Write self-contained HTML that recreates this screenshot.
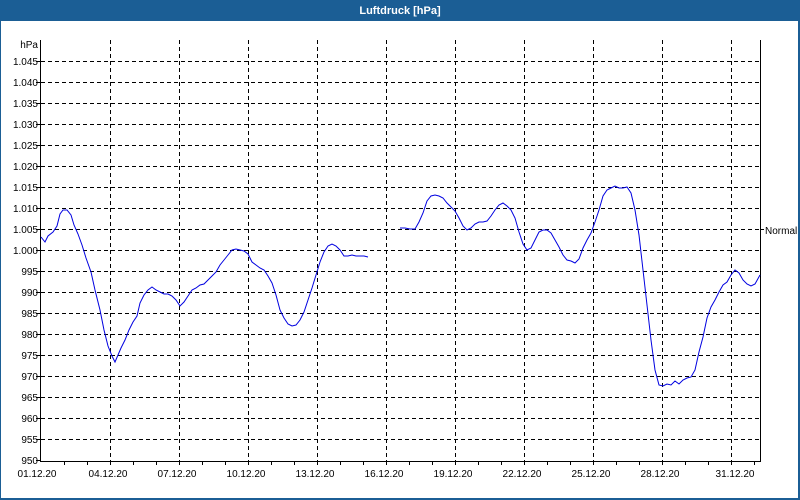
<!DOCTYPE html>
<html><head><meta charset="utf-8"><style>
html,body{margin:0;padding:0;width:800px;height:500px;overflow:hidden;background:#1b5e95}
#c{position:absolute;left:0;top:0}
</style></head><body>
<svg id="c" width="800" height="500" xmlns="http://www.w3.org/2000/svg" font-family="Liberation Sans, sans-serif">
<rect x="0" y="0" width="800" height="500" fill="#1b5e95"/>
<rect x="1" y="21" width="797" height="477" fill="#fff"/>
<text x="400" y="14" fill="#fff" font-size="11" font-weight="bold" text-anchor="middle">Luftdruck [hPa]</text>
<g stroke="#000" stroke-dasharray="4,3" stroke-width="1">
<path d="M41 61.5H760M41 82.5H760M41 103.5H760M41 124.5H760M41 145.5H760M41 166.5H760M41 187.5H760M41 208.5H760M41 229.5H760M41 250.5H760M41 271.5H760M41 292.5H760M41 313.5H760M41 334.5H760M41 355.5H760M41 376.5H760M41 397.5H760M41 418.5H760M41 439.5H760"/>
<path d="M110.5 40V461M179.5 40V461M248.5 40V461M317.5 40V461M386.5 40V461M455.5 40V461M524.5 40V461M593.5 40V461M662.5 40V461M731.5 40V461"/>
</g>
<g stroke="#000" stroke-width="1" fill="none">
<path d="M40.5 40V461.5H760.5V40"/>
<path d="M64.5 461v4M87.5 461v4M110.5 461v4M133.5 461v4M156.5 461v4M179.5 461v4M202.5 461v4M225.5 461v4M248.5 461v4M271.5 461v4M294.5 461v4M317.5 461v4M340.5 461v4M363.5 461v4M386.5 461v4M409.5 461v4M432.5 461v4M455.5 461v4M478.5 461v4M501.5 461v4M524.5 461v4M547.5 461v4M570.5 461v4M593.5 461v4M616.5 461v4M639.5 461v4M662.5 461v4M685.5 461v4M708.5 461v4M731.5 461v4M754.5 461v4"/>
<path d="M36 61.5h5M36 82.5h5M36 103.5h5M36 124.5h5M36 145.5h5M36 166.5h5M36 187.5h5M36 208.5h5M36 229.5h5M36 250.5h5M36 271.5h5M36 292.5h5M36 313.5h5M36 334.5h5M36 355.5h5M36 376.5h5M36 397.5h5M36 418.5h5M36 439.5h5M36 460.5h5M760 229.5h4"/>
</g>
<g font-size="10" fill="#000" text-anchor="end">
<text x="38" y="48">hPa</text>
<text x="38" y="65">1.045</text><text x="38" y="86">1.040</text><text x="38" y="107">1.035</text><text x="38" y="128">1.030</text><text x="38" y="149">1.025</text><text x="38" y="170">1.020</text><text x="38" y="191">1.015</text><text x="38" y="212">1.010</text><text x="38" y="233">1.005</text><text x="38" y="254">1.000</text><text x="38" y="275">995</text><text x="38" y="296">990</text><text x="38" y="317">985</text><text x="38" y="338">980</text><text x="38" y="359">975</text><text x="38" y="380">970</text><text x="38" y="401">965</text><text x="38" y="422">960</text><text x="38" y="443">955</text><text x="38" y="464">950</text>
</g>
<text x="765" y="234" font-size="10">Normal</text>
<g font-size="10" text-anchor="middle">
<text x="37" y="477">01.12.20</text><text x="108" y="477">04.12.20</text><text x="177" y="477">07.12.20</text><text x="246" y="477">10.12.20</text><text x="315" y="477">13.12.20</text><text x="384" y="477">16.12.20</text><text x="453" y="477">19.12.20</text><text x="522" y="477">22.12.20</text><text x="591" y="477">25.12.20</text><text x="660" y="477">28.12.20</text><text x="735" y="477">31.12.20</text>
</g>
<g stroke="#0000e0" stroke-width="1" fill="none">
<polyline points="41,237 45,242 48,236 53,232 57,226 60,214 63,210 67,210 71,215 74,225 78,234 82,245 86,258 91,272 95,290 100,310 104,330 108,346 112,356 115,362 118,355 121,348 125,340 129,330 133,322 137,316 140,303 144,295 148,290 152,287 156,290 160,292 164,294 168,294 172,296 176,300 180,306 184,302 188,296 192,290 196,288 200,285 204,284 208,280 212,276 216,272 220,265 224,260 228,255 232,250 236,249 240,250 244,251 248,254 252,262 256,265 260,268 264,270 268,276 272,283 276,295 280,310 284,318 288,324 292,326 296,325 300,320 304,312 308,300 312,288 316,275 320,262 324,252 328,246 332,244 336,246 340,250 344,256 348,256 352,255 356,256 360,256 364,256 368,257"/>
<polyline points="400,228 405,228 410,229 415,229 419,222 423,213 427,201 431,196 435,195 439,196 443,198 447,203 451,207 455,211 459,218 463,226 467,230 471,228 475,224 479,222 483,222 487,221 491,216 495,210 499,205 503,203 507,206 511,210 515,218 519,232 523,244 527,250 531,248 535,240 539,232 543,230 547,230 551,233 555,240 559,247 563,255 567,260 571,261 575,263 579,259 583,248 587,240 591,233 595,222 599,210 603,196 607,190 611,188 615,186 619,188 623,188 627,187 631,193 635,210 639,235 643,270 647,305 651,340 655,370 659,385 663,386 667,384 671,385 675,381 679,384 683,380 687,378 691,377 695,370 699,352 703,337 707,318 711,307 715,300 719,292 723,285 727,282 731,275 735,270 739,273 743,280 747,284 751,286 755,284 760,275"/>
</g>
</svg>
</body></html>
